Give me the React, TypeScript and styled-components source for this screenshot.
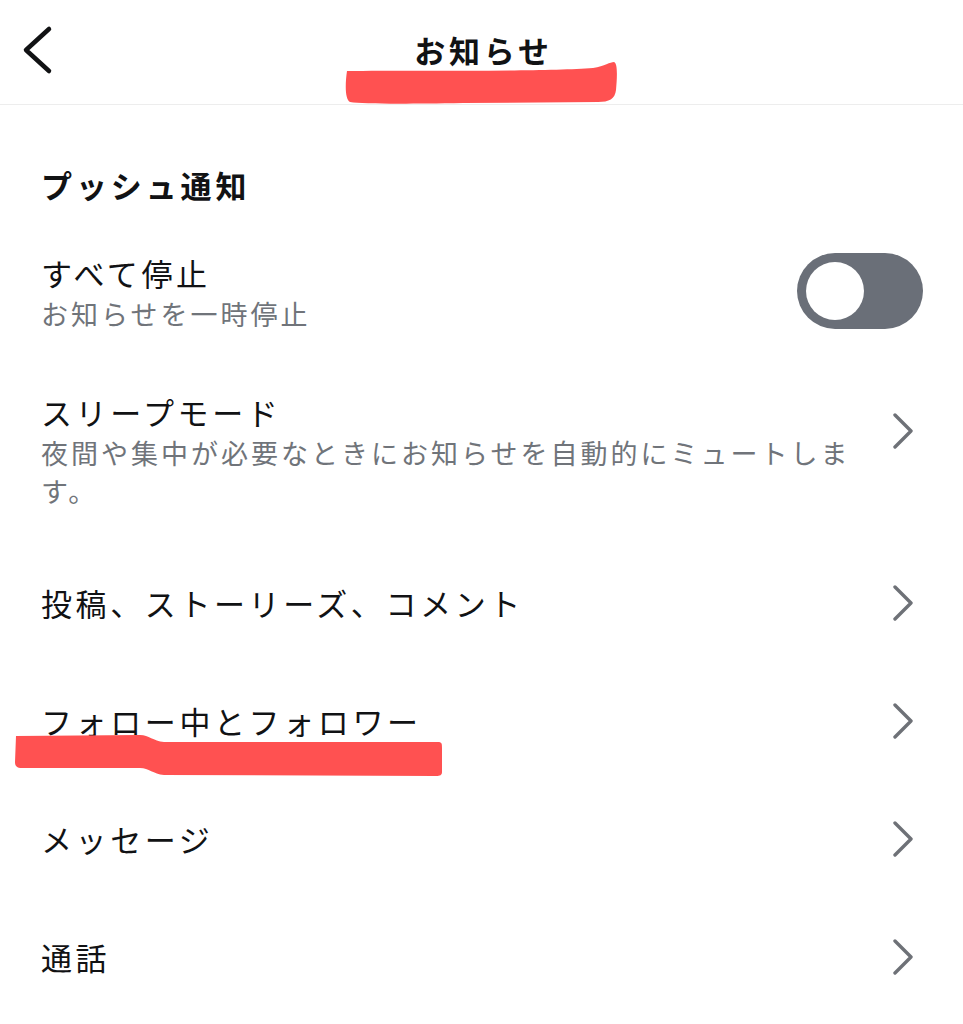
import React from "react";
import styled, { createGlobalStyle } from "styled-components";

const GlobalStyle = createGlobalStyle`
  *, *::before, *::after { box-sizing: border-box; }
  html, body { margin: 0; padding: 0; background: #ffffff; }
  body {
    font-family: "Noto Sans CJK JP", "Noto Sans", "Liberation Sans", sans-serif;
    color: #111214;
    -webkit-font-smoothing: antialiased;
  }
`;

const Page = styled.div`
  position: relative;
  width: 963px;
  min-height: 1024px;
  background: #ffffff;
  overflow: hidden;
`;

const Header = styled.header`
  position: relative;
  height: 105px;
  display: grid;
  grid-template-columns: 1fr auto 1fr;
  align-items: center;
  border-bottom: 1px solid #ededed;
  padding-bottom: 4px;
`;

const BackButton = styled.button`
  justify-self: start;
  display: flex;
  align-items: center;
  background: none;
  border: none;
  padding: 0 0 0 20px;
  margin: 0;
  cursor: pointer;
`;

const HeaderTitle = styled.h1`
  margin: 0 0 0 4px;
  font-size: 31px;
  font-weight: 700;
  letter-spacing: 3.8px;
  line-height: 40px;
  color: #111214;
`;

const SectionTitle = styled.h2`
  margin: 60px 0 0;
  padding-left: 41px;
  font-size: 31px;
  font-weight: 700;
  letter-spacing: 3.9px;
  line-height: 40px;
  color: #111214;
`;

const List = styled.div`
  display: flex;
  flex-direction: column;
  margin-top: 29px;
`;

const Row = styled.div<{ $padTop?: number; $padBottom?: number }>`
  display: flex;
  align-items: center;
  gap: 22px;
  min-height: 118px;
  padding: ${(p) => p.$padTop ?? 0}px 40px ${(p) => p.$padBottom ?? 0}px 41px;
`;

const TextBlock = styled.div`
  flex: 1;
  min-width: 0;
  display: flex;
  flex-direction: column;
`;

const RowTitle = styled.div`
  font-size: 31px;
  font-weight: 400;
  letter-spacing: 3.6px;
  line-height: 40px;
  color: #111214;
`;

const RowSub = styled.div`
  margin-top: 2px;
  font-size: 27px;
  font-weight: 400;
  letter-spacing: 3px;
  line-height: 38px;
  color: #70747a;
`;

const Toggle = styled.div`
  flex: none;
  width: 126px;
  height: 76px;
  border-radius: 38px;
  background: #6a6f78;
  display: flex;
  align-items: center;
  padding-left: 9px;
  margin-bottom: 4px;
`;

const Knob = styled.div`
  width: 58px;
  height: 58px;
  border-radius: 50%;
  background: #ffffff;
`;

const ChevronWrap = styled.div<{ $lift?: number }>`
  flex: none;
  display: flex;
  align-items: center;
  margin-right: 10px;
  margin-bottom: ${(p) => p.$lift ?? 0}px;
`;

const Mark = styled.svg`
  position: absolute;
  pointer-events: none;
`;

const BackIcon = () => (
  <svg width="34" height="50" viewBox="0 0 34 50">
    <path
      d="M29 4 L6 25 L29 46"
      fill="none"
      stroke="#111214"
      strokeWidth="4.5"
      strokeLinecap="round"
      strokeLinejoin="round"
    />
  </svg>
);

const Chevron = ({ lift }: { lift?: number }) => (
  <ChevronWrap $lift={lift}>
    <svg width="20" height="36" viewBox="0 0 20 36">
      <path
        d="M2 2 L18 18 L2 34"
        fill="none"
        stroke="#6e7177"
        strokeWidth="3.4"
        strokeLinecap="round"
        strokeLinejoin="round"
      />
    </svg>
  </ChevronWrap>
);

type Item = {
  title: string;
  sub?: string;
  padTop?: number;
  padBottom?: number;
  lift?: number;
};

const items: Item[] = [
  {
    title: "スリープモード",
    sub: "夜間や集中が必要なときにお知らせを自動的にミュートします。",
    padTop: 40,
    padBottom: 34,
    lift: 40,
  },
  { title: "投稿、ストーリーズ、コメント" },
  { title: "フォロー中とフォロワー" },
  { title: "メッセージ" },
  { title: "通話" },
];

export default function App() {
  return (
    <Page>
      <GlobalStyle />
      <Header>
        <BackButton aria-label="戻る">
          <BackIcon />
        </BackButton>
        <HeaderTitle>お知らせ</HeaderTitle>
        <div />
      </Header>

      <SectionTitle>プッシュ通知</SectionTitle>

      <List>
        <Row>
          <TextBlock>
            <RowTitle>すべて停止</RowTitle>
            <RowSub>お知らせを一時停止</RowSub>
          </TextBlock>
          <Toggle>
            <Knob />
          </Toggle>
        </Row>
        {items.map((it) => (
          <Row key={it.title} $padTop={it.padTop} $padBottom={it.padBottom}>
            <TextBlock>
              <RowTitle>{it.title}</RowTitle>
              {it.sub && <RowSub>{it.sub}</RowSub>}
            </TextBlock>
            <Chevron lift={it.lift} />
          </Row>
        ))}
      </List>

      <Mark
        width="276"
        height="48"
        viewBox="0 0 276 48"
        style={{ left: 343, top: 59 }}
      >
        <path
          d="M4 12 C60 11 200 13 250 9 C262 7 267 3 271 3 C275 4 274 20 273 31 C272 40 266 43 255 43 L120 44 C60 45 20 45 7 43 C2 40 2 26 4 12 Z"
          fill="#ff5151"
        />
      </Mark>

      <Mark
        width="434"
        height="50"
        viewBox="0 0 434 50"
        style={{ left: 12, top: 730 }}
      >
        <path
          d="M4 6 L128 5 C137 5 141 11 152 12 L426 12 C430 12 430 14 430 18 L430 42 C430 45 428 46 424 46 L152 45 C141 44 137 38 128 38 L10 38 C5 38 3 36 3 32 Z"
          fill="#ff5151"
        />
      </Mark>
    </Page>
  );
}
